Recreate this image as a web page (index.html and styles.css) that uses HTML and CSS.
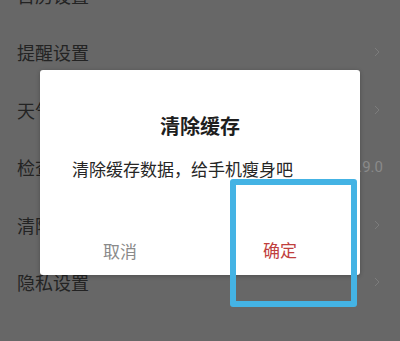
FILE: index.html
```html
<!DOCTYPE html>
<html lang="zh">
<head>
<meta charset="utf-8">
<link rel="stylesheet" href="styles.css">
</head>
<body>
<div class="list">
  <div class="row"><span class="label">日历设置</span><svg class="chev" viewBox="0 0 6 10"><polyline points="1,1 5,5 1,9"/></svg></div>
  <div class="row"><span class="label">提醒设置</span><svg class="chev" viewBox="0 0 6 10"><polyline points="1,1 5,5 1,9"/></svg></div>
  <div class="row"><span class="label">天气设置</span><svg class="chev" viewBox="0 0 6 10"><polyline points="1,1 5,5 1,9"/></svg></div>
  <div class="row"><span class="label">检查更新</span><span class="ver">V1.9.0</span></div>
  <div class="row"><span class="label">清除缓存</span><svg class="chev" viewBox="0 0 6 10"><polyline points="1,1 5,5 1,9"/></svg></div>
  <div class="row"><span class="label">隐私设置</span><svg class="chev" viewBox="0 0 6 10"><polyline points="1,1 5,5 1,9"/></svg></div>
</div>
<div class="dialog">
  <div class="title">清除缓存</div>
  <div class="msg">清除缓存数据，给手机瘦身吧</div>
  <div class="actions">
    <div class="btn cancel">取消</div>
    <div class="btn ok">确定</div>
  </div>
</div>
<div class="highlight"></div>
</body>
</html>
```
FILE: styles.css
```css
html, body {
  margin: 0;
  padding: 0;
}
body {
  width: 400px;
  height: 341px;
  overflow: hidden;
  position: relative;
  background: #676767;
  font-family: "Noto Sans CJK SC", "Noto Sans", sans-serif;
}
.list {
  display: flex;
  flex-direction: column;
  margin-top: -34px;
}
.row {
  height: 57.5px;
  display: flex;
  align-items: center;
  justify-content: space-between;
  padding: 0 20px 0 17px;
}
.label {
  font-size: 18px;
  color: #232323;
}
.chev {
  width: 6px;
  height: 10px;
  fill: none;
  stroke: #7c7c7c;
  stroke-width: 1;
}
.ver {
  font-family: "Roboto", sans-serif;
  font-size: 15px;
  color: #8a8a8a;
  margin-right: -3px;
}
.dialog {
  position: absolute;
  left: 40px;
  top: 70px;
  width: 320px;
  height: 205px;
  background: #fff;
  border-radius: 3px;
  box-shadow: 0 1px 4px rgba(0,0,0,0.25);
  display: flex;
  flex-direction: column;
}
.title {
  margin-top: 42px;
  text-align: center;
  font-size: 20px;
  line-height: 28px;
  font-weight: 700;
  color: #1e1e1e;
}
.msg {
  margin-top: 17px;
  padding-left: 32px;
  font-size: 17px;
  line-height: 24px;
  color: #262626;
}
.actions {
  margin-top: auto;
  height: 50px;
  display: flex;
}
.btn {
  flex: 1;
  display: flex;
  align-items: center;
  justify-content: center;
  font-size: 17px;
}
.cancel {
  color: #8a8a8a;
}
.ok {
  color: #c0403e;
  padding-bottom: 1px;
}
.highlight {
  position: absolute;
  left: 230px;
  top: 179px;
  width: 115px;
  height: 116px;
  border: 6px solid #44b3e4;
  border-radius: 3px;
}
```
